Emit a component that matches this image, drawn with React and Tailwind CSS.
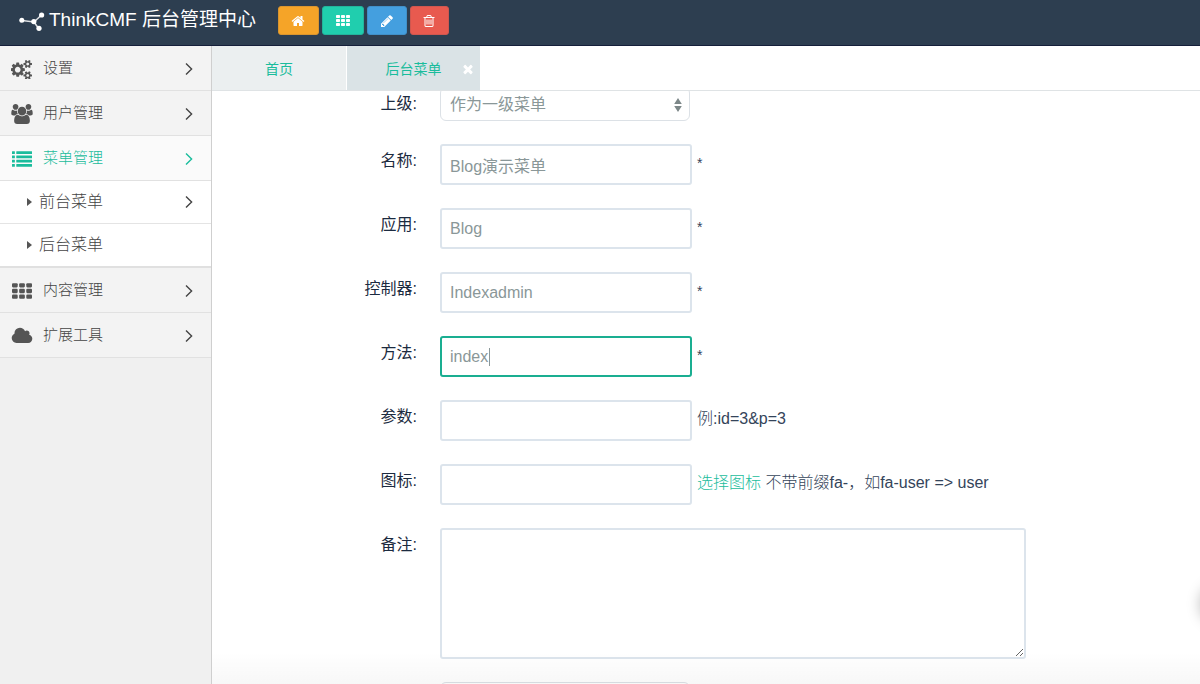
import React from "react";

const PATHS = {
  home: "M1472 992v480q0 26-19 45t-45 19h-384v-384h-256v384h-384q-26 0-45-19t-19-45v-480q0-1 .5-3t.5-3l575-474 575 474q1 2 1 6zm223-69l-62 74q-8 9-21 11h-3q-13 0-21-7l-692-577-692 577q-12 8-24 7-13-2-21-11l-62-74q-8-10-7-23.5t11-21.5l719-599q32-26 76-26t76 26l244 204v-195q0-14 9-23t23-9h192q14 0 23 9t9 23v408l219 182q10 8 11 21.5t-7 23.5z",
  pencil:
    "M491 1536l91-91-235-235-91 91v107h128v128h107zm523-928q0-22-22-22-10 0-17 7l-542 542q-7 7-7 17 0 22 22 22 10 0 17-7l542-542q7-7 7-17zm-54-192l416 416-832 832h-416v-416zm683 96q0 53-37 90l-166 166-416-416 166-165q36-38 90-38 53 0 91 38l235 234q37 39 37 91z",
  trash:
    "M704 736v576q0 14-9 23t-23 9h-64q-14 0-23-9t-9-23v-576q0-14 9-23t23-9h64q14 0 23 9t9 23zm256 0v576q0 14-9 23t-23 9h-64q-14 0-23-9t-9-23v-576q0-14 9-23t23-9h64q14 0 23 9t9 23zm256 0v576q0 14-9 23t-23 9h-64q-14 0-23-9t-9-23v-576q0-14 9-23t23-9h64q14 0 23 9t9 23zm128 724v-948h-896v948q0 22 7 40.5t14.5 27 10.5 8.5h832q3 0 10.5-8.5t14.5-27 7-40.5zm-672-1076h448l-48-117q-7-9-17-11h-317q-10 2-17 11zm928 32v64q0 14-9 23t-23 9h-96v948q0 83-47 143.5t-113 60.5h-832q-66 0-113-58.5t-47-141.5v-952h-96q-14 0-23-9t-9-23v-64q0-14 9-23t23-9h309l70-167q15-37 54-63t79-26h320q40 0 79 26t54 63l70 167h309q14 0 23 9t9 23z",
  times:
    "M1490 1322q0 40-28 68l-136 136q-28 28-68 28t-68-28l-294-294-294 294q-28 28-68 28t-68-28l-136-136q-28-28-28-68t28-68l294-294-294-294q-28-28-28-68t28-68l136-136q28-28 68-28t68 28l294 294 294-294q28-28 68-28t68 28l136 136q28 28 28 68t-28 68l-294 294 294 294q28 28 28 68z",
  cloud:
    "M1984 1152q0 159-112.5 271.5t-271.5 112.5h-1088q-185 0-316.5-131.5t-131.5-316.5q0-132 71-241.5t187-163.5q-2-28-2-43 0-212 150-362t362-150q158 0 286.5 88t187.5 230q70-62 166-62 106 0 181 75t75 181q0 75-41 138 129 30 213 134.5t84 239.5z",
  cogs: "M832 960q0-106-75-181t-181-75-181 75-75 181 75 181 181 75 181-75 75-181zm768 512q0-52-38-90t-90-38-90 38-38 90q0 53 37.5 90.5t90.5 37.5 90.5-37.5 37.5-90.5zm0-1024q0-52-38-90t-90-38-90 38-38 90q0 53 37.5 90.5t90.5 37.5 90.5-37.5 37.5-90.5zm-384 421v185q0 10-7 19.5t-16 10.5l-155 24q-11 35-32 76 34 48 90 115 7 11 7 20 0 12-7 19-23 30-82.5 89.5t-78.5 59.5q-11 0-21-7l-115-90q-37 19-77 31-11 108-23 155-7 24-30 24h-186q-11 0-20-7.5t-10-17.5l-23-153q-34-10-75-31l-118 89q-7 7-20 7-11 0-21-8-144-133-144-160 0-9 7-19 10-14 41-53t47-61q-23-44-35-82l-152-24q-10-1-17-9.5t-7-19.5v-185q0-10 7-19.5t16-10.5l155-24q11-35 32-76-34-48-90-115-7-11-7-20 0-12 7-20 22-30 82-89t79-59q11 0 21 7l115 90q34-18 77-32 11-108 23-154 7-24 30-24h186q11 0 20 7.5t10 17.5l23 153q34 10 75 31l118-89q8-7 20-7 11 0 21 8 144 133 144 160 0 8-7 19-12 16-42 54t-45 60q23 48 34 82l152 23q10 2 17 10.5t7 19.5zm640 533v140q0 16-149 31-12 27-30 52 51 113 51 138 0 4-4 7-122 71-124 71-8 0-46-47t-52-68q-20 2-30 2t-30-2q-14 21-52 68t-46 47q-2 0-124-71-4-3-4-7 0-25 51-138-18-25-30-52-149-15-149-31v-140q0-16 149-31 13-29 30-52-51-113-51-138 0-4 4-7 4-2 35-20t59-34 30-16q8 0 46 46.5t52 67.5q20-2 30-2t30 2q51-71 92-112l6-2q4 0 124 70 4 3 4 7 0 25-51 138 17 23 30 52 149 15 149 31zm0-1024v140q0 16-149 31-12 27-30 52 51 113 51 138 0 4-4 7-122 71-124 71-8 0-46-47t-52-68q-20 2-30 2t-30-2q-14 21-52 68t-46 47q-2 0-124-71-4-3-4-7 0-25 51-138-18-25-30-52-149-15-149-31v-140q0-16 149-31 13-29 30-52-51-113-51-138 0-4 4-7 4-2 35-20t59-34 30-16q8 0 46 46.5t52 67.5q20-2 30-2t30 2q51-71 92-112l6-2q4 0 124 70 4 3 4 7 0 25-51 138 17 23 30 52 149 15 149 31z",
  users:
    "M593 896q-162 5-265 128h-134q-82 0-138-40.5t-56-118.5q0-353 124-353 6 0 43.5 21t97.5 42.5 119 21.5q67 0 133-23-5 37-5 66 0 139 81 256zm1071 637q0 120-73 189.5t-194 69.5h-874q-121 0-194-69.5t-73-189.5q0-53 3.5-103.5t14-109 26.5-108.5 43-97.5 62-81 85.5-53.5 111.5-20q10 0 43 21.5t73 48 107 48 135 21.5 135-21.5 107-48 73-48 43-21.5q61 0 111.5 20t85.5 53.5 62 81 43 97.5 26.5 108.5 14 109 3.5 103.5zm-1024-1277q0 106-75 181t-181 75-181-75-75-181 75-181 181-75 181 75 75 181zm704 384q0 159-112.5 271.5t-271.5 112.5-271.5-112.5-112.5-271.5 112.5-271.5 271.5-112.5 271.5 112.5 112.5 271.5zm576 225q0 78-56 118.5t-138 40.5h-134q-103-123-265-128 81-117 81-256 0-29-5-66 66 23 133 23 59 0 119-21.5t97.5-42.5 43.5-21q124 0 124 353zm-128-609q0 106-75 181t-181 75-181-75-75-181 75-181 181-75 181 75 75 181z",
};

function Glyph({ name, width = 1792, className }) {
  return (
    <svg viewBox={`0 0 ${width} 1792`} className={className} fill="currentColor" aria-hidden="true">
      <path d={PATHS[name]} />
    </svg>
  );
}

function GridGlyph({ className }) {
  const cells = [];
  for (const y of [0, 512, 1024]) for (const x of [0, 640, 1280]) cells.push([x, y]);
  return (
    <svg viewBox="0 0 1792 1408" className={className} fill="currentColor" aria-hidden="true">
      {cells.map(([x, y]) => (
        <rect key={`${x}-${y}`} x={x} y={y} width="512" height="384" rx="96" />
      ))}
    </svg>
  );
}

function ListGlyph({ className }) {
  return (
    <svg viewBox="0 0 1792 1408" className={className} fill="currentColor" aria-hidden="true">
      {[0, 384, 768, 1152].map((y) => (
        <g key={y}>
          <rect x="0" y={y} width="256" height="256" rx="32" />
          <rect x="384" y={y} width="1408" height="256" rx="32" />
        </g>
      ))}
    </svg>
  );
}

function Angle() {
  return (
    <svg viewBox="0 0 8 14" className="h-3.5 w-2" fill="none" stroke="currentColor" strokeWidth="1.4" aria-hidden="true">
      <path d="M1 1.5 6.6 7 1 12.5" />
    </svg>
  );
}

function Logo() {
  return (
    <svg viewBox="0 0 28 20" className="h-5 w-7" aria-hidden="true">
      <path d="M4 9.5 16 11 23.5 4M16 11l5 7" stroke="#fff" strokeWidth="1.5" fill="none" opacity=".85" />
      <g fill="#fff">
        <circle cx="3.8" cy="9.3" r="2.5" />
        <circle cx="15.8" cy="10.6" r="2.6" />
        <circle cx="23.6" cy="4" r="2.6" />
        <circle cx="21" cy="17.3" r="2.6" />
      </g>
    </svg>
  );
}

const shortcuts = [
  { label: "首页", tone: "bg-[#f5a428] border-[#d9952f]", icon: <Glyph name="home" className="size-[14px]" />, pad: "w-[41px]" },
  { label: "列表", tone: "bg-[#20ceae] border-[#23b49c]", icon: <GridGlyph className="h-[11px] w-[14px]" />, pad: "w-[42px]" },
  { label: "编辑", tone: "bg-[#449fdf] border-[#4190c8]", icon: <Glyph name="pencil" className="size-[14px]" />, pad: "w-10" },
  { label: "清空", tone: "bg-[#e85a4f] border-[#cf574f]", icon: <Glyph name="trash" className="size-[14px]" />, pad: "w-[39px]" },
];

const menu = [
  { label: "设置", icon: <Glyph name="cogs" width={1920} className="h-5 w-[22px]" /> },
  { label: "用户管理", icon: <Glyph name="users" width={1920} className="h-5 w-[22px]" /> },
  {
    label: "菜单管理",
    icon: <ListGlyph className="h-4 w-5" />,
    active: true,
    children: [{ label: "前台菜单", more: true }, { label: "后台菜单" }],
  },
  { label: "内容管理", icon: <GridGlyph className="h-4 w-5" /> },
  { label: "扩展工具", icon: <Glyph name="cloud" width={2048} className="h-5 w-[22px]" /> },
];

function MenuEntry({ item }) {
  return (
    <li>
      <button
        type="button"
        aria-expanded={Boolean(item.children)}
        className={`flex h-[45px] w-full items-center border-b border-[#e1e1e1] pt-px pr-[18px] pl-[10px] text-left text-[15px] ${
          item.active ? "bg-[#fafafa] text-[#1abc9c]" : "bg-[#f3f3f3] text-[#444]"
        }`}
      >
        <span className={`flex w-6 justify-center ${item.active ? "" : "text-[#555]"}`}>{item.icon}</span>
        <span className="ml-[9px] flex-1">{item.label}</span>
        <Angle />
      </button>
      {item.children && (
        <ul className="border-b-2 border-[#e0e0e0] bg-white">
          {item.children.map((child) => (
            <li key={child.label} className="border-b border-[#e4e4e4] last:border-b-0">
              <a href="#" className="flex h-[42px] items-center pr-[18px] pl-[27px] text-base text-[#444]">
                <svg viewBox="0 0 5 8" className="h-2 w-[5px]" fill="#555" aria-hidden="true">
                  <path d="M0 0l5 4-5 4z" />
                </svg>
                <span className="ml-[7px] flex-1">{child.label}</span>
                {child.more && <Angle />}
              </a>
            </li>
          ))}
        </ul>
      )}
    </li>
  );
}

const fields = [
  { id: "name", label: "名称:", value: "Blog演示菜单", required: true },
  { id: "app", label: "应用:", value: "Blog", required: true },
  { id: "controller", label: "控制器:", value: "Indexadmin", required: true },
  { id: "action", label: "方法:", value: "index", required: true, focused: true },
  { id: "params", label: "参数:", value: "", hint: "例:id=3&p=3" },
  {
    id: "icon",
    label: "图标:",
    value: "",
    hint: (
      <>
        <a href="#" className="text-[#1abc9c]">
          选择图标
        </a>{" "}
        不带前缀fa-，如fa-user =&gt; user
      </>
    ),
  },
];

function Row({ id, label, children }) {
  return (
    <div className="flex items-start">
      <div className="mr-[23px] w-[205px] shrink-0 pt-[5px] text-right leading-6 font-normal text-[#1c2b40]">
        {label && <label htmlFor={id}>{label}</label>}
      </div>
      {children}
    </div>
  );
}

function SelectBox({ id, options, ...rest }) {
  return (
    <div className="relative w-[250px]">
      <select
        id={id}
        className="h-[34px] w-full appearance-none rounded-md border border-[#dce1e6] bg-white px-[9px] pt-0.5 font-normal text-[#8a9798]"
        {...rest}
      >
        {options.map((o) => (
          <option key={o}>{o}</option>
        ))}
      </select>
      <svg
        viewBox="0 0 8 14"
        className="pointer-events-none absolute top-[11px] right-2 h-3.5 w-2"
        fill="#7c8788"
        aria-hidden="true"
      >
        <path d="M4 0l3.8 6H.2zM4 14l3.8-6H.2z" />
      </svg>
    </div>
  );
}

export default function App() {
  return (
    <div className="flex h-screen flex-col overflow-hidden bg-white font-['Liberation_Sans','Noto_Sans_CJK_SC',sans-serif] text-base font-light text-[#34445a]">
      <header className="flex h-[46px] shrink-0 items-start border-b border-[#151f3a] bg-[#2d3e50] pl-[18px]">
        <h1 className="flex items-center pt-[6px] text-[19px] leading-7 font-normal text-white">
          <span className="mr-[3px] pt-0.5">
            <Logo />
          </span>
          ThinkCMF 后台管理中心
        </h1>
        <div className="ml-[22px] flex gap-[3px] pt-1.5">
          {shortcuts.map((s) => (
            <button
              key={s.label}
              type="button"
              aria-label={s.label}
              className={`flex h-[29px] items-center justify-center rounded-[3px] border text-white ${s.tone} ${s.pad}`}
            >
              {s.icon}
            </button>
          ))}
        </div>
      </header>

      <div className="flex min-h-0 flex-1">
        <nav className="w-[212px] shrink-0 border-r border-[#cfcfcf] bg-[#f0f0f0]">
          <ul>
            {menu.map((m) => (
              <MenuEntry key={m.label} item={m} />
            ))}
          </ul>
        </nav>

        <div className="flex min-w-0 flex-1 flex-col">
          <div className="flex h-[45px] shrink-0 border-b border-[#dfe3e5] text-sm font-normal text-[#1abc9c]">
            <button type="button" className="w-[135px] border-r border-white bg-[#ebeff0] pt-0.5">
              首页
            </button>
            <div className="relative flex w-[133px] bg-[#dae3e6]">
              <button type="button" className="flex-1 pt-0.5">
                后台菜单
              </button>
              <button type="button" aria-label="关闭" className="absolute top-4 right-[5px] text-white">
                <Glyph name="times" className="size-[14px]" />
              </button>
            </div>
          </div>

          <main className="relative min-h-0 flex-1 overflow-hidden">
            <form className="-mt-1 flex flex-col gap-[23px]">
              <Row id="parent" label="上级:">
                <SelectBox id="parent" options={["作为一级菜单"]} />
              </Row>
              {fields.map((f) => (
                <Row key={f.id} id={f.id} label={f.label}>
                  <div className="relative">
                    <input
                      id={f.id}
                      type="text"
                      defaultValue={f.value}
                      className={`block h-[41px] w-[252px] rounded-[3px] border-2 bg-white px-2 font-normal text-[#8a9798] outline-none ${
                        f.focused ? "border-[#1aae91]" : "border-[#dce4ec]"
                      }`}
                    />
                    {f.focused && <span className="absolute top-3 left-[49px] h-[18px] w-px bg-[#8a9798]" />}
                  </div>
                  <p className="ml-[5px] pt-[7px] leading-6">
                    {f.required ? <span className="text-sm">*</span> : f.hint}
                  </p>
                </Row>
              ))}
              <Row id="remark" label="备注:">
                <textarea
                  id="remark"
                  className="block h-[131px] w-[586px] resize rounded-[3px] border-2 border-[#dce4ec] bg-white px-2 outline-none"
                />
              </Row>
              <Row>
                <SelectBox id="status" aria-label="状态" options={[""]} />
              </Row>
            </form>
            <div className="pointer-events-none absolute inset-x-0 bottom-0 h-8 bg-linear-to-b from-black/0 to-black/3" />
            <div className="pointer-events-none absolute -right-10 bottom-[60px] size-10 rounded-full shadow-[0_0_14px_rgba(0,0,0,0.25)]" />
          </main>
        </div>
      </div>
    </div>
  );
}
